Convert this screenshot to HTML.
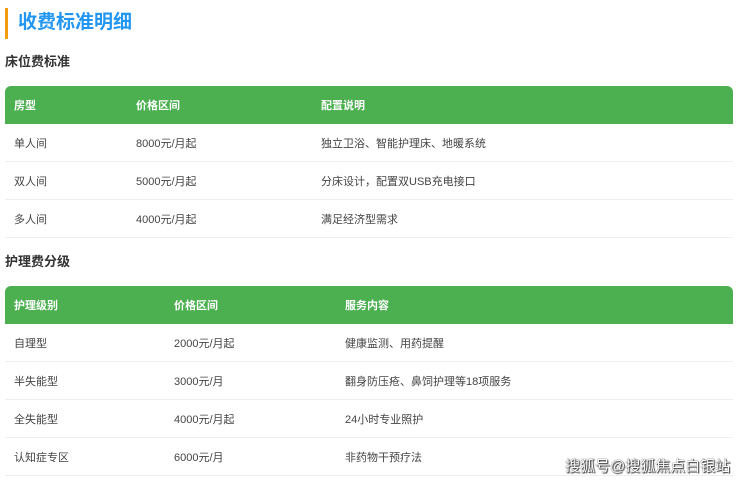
<!DOCTYPE html><html><head><meta charset="utf-8"><style>
body{margin:0;width:740px;height:481px;background:#fff;font-family:"Liberation Sans","Noto Sans CJK SC",sans-serif;position:relative;overflow:hidden}
.bar{position:absolute;left:5px;top:8px;width:3px;height:31px;background:#f39c12}
.t{position:absolute;left:18px;top:10px;font-size:19px;font-weight:bold;color:#2196f3;line-height:26px}
.h{position:absolute;left:5px;font-size:13px;font-weight:bold;color:#333;line-height:16px}
table{position:absolute;left:5px;width:728px;border-collapse:collapse;font-size:11px;color:#444}
th{background:#4caf50;color:#fff;text-align:left;font-weight:bold;height:38px;padding:0 0 0 9px}
th:first-child{border-top-left-radius:6px}th:last-child{border-top-right-radius:6px}
td{height:37px;padding:0 0 0 9px;border-bottom:1px solid #eee}
.wm{position:absolute;left:565px;top:455px;font-size:15px;color:#fff;text-shadow:0 0 1px #000,1px 1px 1px #333;white-space:nowrap}
</style></head><body>
<div class="bar"></div><div class="t">收费标准明细</div>
<div class="h" style="top:54px">床位费标准</div>
<table style="top:86px"><tr><th style="width:113px">房型</th><th style="width:176px">价格区间</th><th>配置说明</th></tr>
<tr><td>单人间</td><td>8000元/月起</td><td>独立卫浴、智能护理床、地暖系统</td></tr>
<tr><td>双人间</td><td>5000元/月起</td><td>分床设计，配置双USB充电接口</td></tr>
<tr><td>多人间</td><td>4000元/月起</td><td>满足经济型需求</td></tr></table>
<div class="h" style="top:254px">护理费分级</div>
<table style="top:286px"><tr><th style="width:151px">护理级别</th><th style="width:162px">价格区间</th><th>服务内容</th></tr>
<tr><td>自理型</td><td>2000元/月起</td><td>健康监测、用药提醒</td></tr>
<tr><td>半失能型</td><td>3000元/月</td><td>翻身防压疮、鼻饲护理等18项服务</td></tr>
<tr><td>全失能型</td><td>4000元/月起</td><td>24小时专业照护</td></tr>
<tr><td>认知症专区</td><td>6000元/月</td><td>非药物干预疗法</td></tr></table>
<div class="wm">搜狐号@搜狐焦点白银站</div>
</body></html>
